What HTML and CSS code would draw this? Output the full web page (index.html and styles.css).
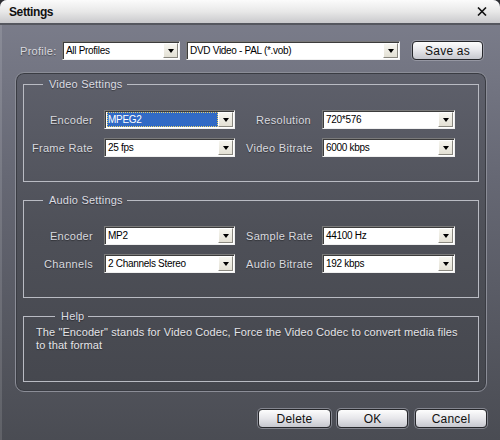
FILE: index.html
```html
<!DOCTYPE html>
<html lang="en">

<head>
    <meta charset="UTF-8">
    <title>Settings</title>
    <link rel="stylesheet" href="styles.css">
</head>

<body>
    <div class="window">
        <div class="titlebar">
            <span class="title">Settings</span>
            <svg class="close" width="10" height="9" viewBox="0 0 10 9">
                <path d="M1 0.5 L9 8.5 M9 0.5 L1 8.5" stroke="#111" stroke-width="1.6" fill="none" />
            </svg>
        </div>

        <div class="window-body">
            <div class="profile-row">
                <span class="label profile-label">Profile:</span>
                <div class="combo combo-profile"><span class="combo-text">All Profiles</span><span class="combo-btn"></span></div>
                <div class="combo combo-preset"><span class="combo-text">DVD Video - PAL (*.vob)</span><span class="combo-btn"></span></div>
                <div class="btn btn-save">Save as</div>
            </div>

            <div class="panel">
                <fieldset class="group">
                    <legend>Video Settings</legend>
                    <div class="field-grid">
                        <span class="label">Encoder</span>
                        <div class="combo"><span class="combo-text selected">MPEG2</span><span class="combo-btn"></span></div>
                        <span class="label">Resolution</span>
                        <div class="combo"><span class="combo-text">720*576</span><span class="combo-btn"></span></div>

                        <span class="label">Frame Rate</span>
                        <div class="combo"><span class="combo-text">25 fps</span><span class="combo-btn"></span></div>
                        <span class="label">Video Bitrate</span>
                        <div class="combo"><span class="combo-text">6000 kbps</span><span class="combo-btn"></span></div>
                    </div>
                </fieldset>

                <fieldset class="group">
                    <legend>Audio Settings</legend>
                    <div class="field-grid">
                        <span class="label">Encoder</span>
                        <div class="combo"><span class="combo-text">MP2</span><span class="combo-btn"></span></div>
                        <span class="label">Sample Rate</span>
                        <div class="combo"><span class="combo-text">44100 Hz</span><span class="combo-btn"></span></div>

                        <span class="label">Channels</span>
                        <div class="combo"><span class="combo-text">2 Channels Stereo</span><span class="combo-btn"></span></div>
                        <span class="label">Audio Bitrate</span>
                        <div class="combo"><span class="combo-text">192 kbps</span><span class="combo-btn"></span></div>
                    </div>
                </fieldset>

                <fieldset class="group group-help">
                    <legend>Help</legend>
                    <p class="help-text">The "Encoder" stands for Video Codec, Force the Video Codec to convert media files to that format</p>
                </fieldset>
            </div>

            <div class="button-row">
                <div class="btn btn-delete">Delete</div>
                <div class="btn btn-ok">OK</div>
                <div class="btn btn-cancel">Cancel</div>
            </div>
        </div>
    </div>
</body>

</html>
```

FILE: styles.css
```css
html,
body {
    margin: 0;
}

body {
    background-color: #2e2f33;
    font-family: "Liberation Sans", Arial, sans-serif;
}

.window {
    width: 500px;
    height: 440px;
    display: flex;
    flex-direction: column;
    border-radius: 7px 7px 0 0;
    overflow: hidden;
    background: linear-gradient(#7d7f8d, #666874 40%, #4a4c53);
    box-shadow: inset 2px 0 0 rgba(255, 255, 255, 0.12);
}

/* title bar */
.titlebar {
    height: 23px;
    flex: none;
    display: flex;
    align-items: center;
    justify-content: space-between;
    padding: 0 13px 0 9px;
    background: linear-gradient(#fbfbfb, #e8e8e8 50%, #c9c9cc);
    border-bottom: 2px solid #55575f;
}

.titlebar .title {
    font-weight: bold;
    font-size: 12px;
    letter-spacing: -0.4px;
    color: #111;
}

.window-body {
    flex: 1;
    padding: 16px 13px 0 15px;
    display: flex;
    flex-direction: column;
}

.label {
    font-size: 11px;
    letter-spacing: 0.3px;
    color: #d9d9df;
    text-shadow: 0 1px 1px rgba(0, 0, 0, 0.4);
    white-space: nowrap;
}

/* profile row */
.profile-row {
    display: flex;
    align-items: center;
    height: 19px;
    padding-left: 5px;
}

.profile-label {
    width: 42px;
}

.combo-profile {
    width: 118px;
}

.combo-preset {
    width: 214px;
    margin-left: 6px;
}

.btn-save {
    width: 71px;
    margin-left: 12px;
}

/* drop-down boxes */
.combo {
    display: flex;
    height: 19px;
    box-sizing: border-box;
    background-color: #fff;
    border: 1px solid;
    border-color: #7a7a7a #f0f0f0 #f0f0f0 #7a7a7a;
    box-shadow: inset 1px 1px 0 #3c3c3c;
    padding: 1px 1px 1px 2px;
}

.combo-text {
    flex: 1;
    font-size: 10px;
    letter-spacing: -0.3px;
    line-height: 15px;
    color: #000;
    padding-left: 1px;
    white-space: nowrap;
    overflow: hidden;
}

.combo-text.selected {
    background-color: #316ac5;
    color: #fff;
    outline: 1px dotted #e6cf6a;
    outline-offset: -1px;
}

.combo-btn {
    width: 15px;
    flex: none;
    box-sizing: border-box;
    display: flex;
    align-items: center;
    justify-content: center;
    background: linear-gradient(#f7f6f0, #e3e0d4);
    border: 1px solid;
    border-color: #fff #8a8880 #8a8880 #fff;
}

.combo-btn::after {
    content: "";
    border-left: 3px solid transparent;
    border-right: 3px solid transparent;
    border-top: 4px solid #000;
}

/* main panel */
.panel {
    margin-top: 12px;
    height: 320px;
    box-sizing: border-box;
    border: 1px solid #8b8d97;
    border-radius: 9px;
    background: linear-gradient(#5e606b, #4e5058 50%, #45474e);
    box-shadow: inset 0 0 0 1px #3a3c43;
    padding: 4px 7px 9px;
    display: flex;
    flex-direction: column;
}

.group {
    margin: 0;
    padding: 19px 0 24px;
    min-width: 0;
    border: 1px solid #b9bbc3;
}

.group + .group {
    margin-top: 11px;
}

.group legend {
    margin-left: 19px;
    padding: 0 4px 0 6px;
    font-size: 11px;
    line-height: 14px;
    letter-spacing: 0.2px;
    color: #dcdce2;
    text-shadow: 0 1px 1px rgba(0, 0, 0, 0.4);
}

.field-grid {
    display: grid;
    grid-template-columns: 69px 131px 65px 133px;
    grid-auto-rows: 19px;
    column-gap: 11px;
    row-gap: 9px;
}

.field-grid .label {
    text-align: right;
    align-self: center;
}

.group-help {
    flex: 1;
    padding: 3px 18px 0 12px;
}

.help-text {
    margin: 0;
    font-size: 11px;
    line-height: 13px;
    letter-spacing: 0.1px;
    color: #e4e4e8;
    text-shadow: 0 1px 1px rgba(0, 0, 0, 0.35);
}

/* buttons */
.btn {
    height: 19px;
    box-sizing: border-box;
    display: flex;
    align-items: center;
    justify-content: center;
    border: 1px solid #26272b;
    border-radius: 4px;
    background: linear-gradient(#fdfdfd, #e6e6ea 50%, #c6c7ce);
    box-shadow: 0 0 0 1px rgba(170, 172, 182, 0.6);
    font-size: 12px;
    letter-spacing: 0.2px;
    color: #111;
}

.button-row {
    display: flex;
    justify-content: flex-end;
    margin-top: 17px;
}

.btn-delete {
    width: 73px;
}

.btn-ok {
    width: 71px;
    margin-left: 6px;
}

.btn-cancel {
    width: 72px;
    margin-left: 7px;
}
```
